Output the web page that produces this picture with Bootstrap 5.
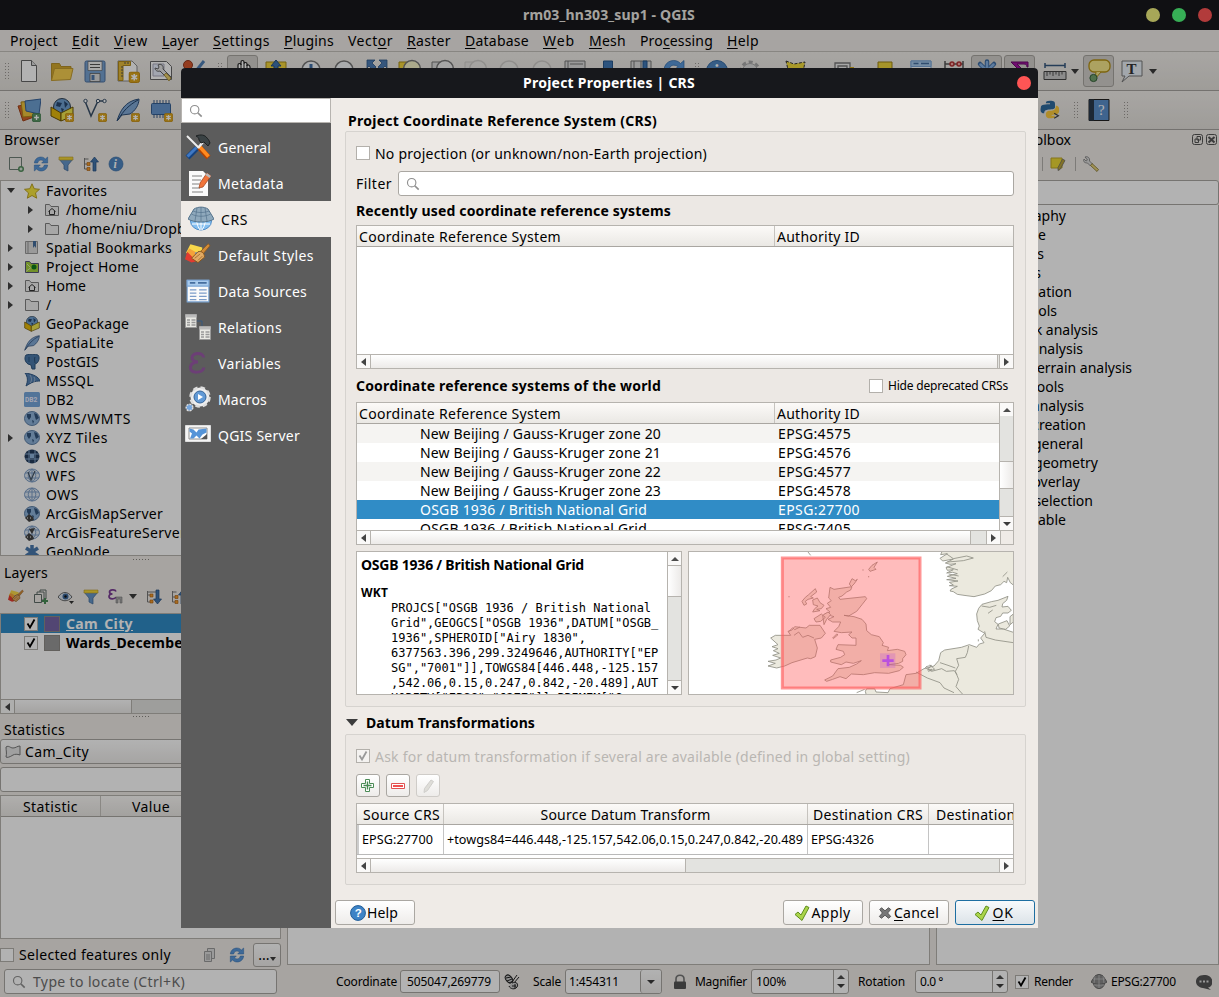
<!DOCTYPE html>
<html lang="en">
<head>
<meta charset="utf-8">
<meta name="viewport" content="width=device-width, initial-scale=1">
<title>rm03_hn303_sup1 - QGIS</title>
<link href="https://cdn.jsdelivr.net/npm/bootstrap@5.3.0/dist/css/bootstrap.min.css" rel="stylesheet">
<style>
:root{--win:#efebe7;--line:#b6b3ae;--sel:#308cc6}
body{font:14px/19px "Noto Sans","Open Sans",sans-serif;color:#000;background:var(--win);width:1219px;height:997px;overflow:hidden;position:relative}
span,b,u{white-space:nowrap}
u{text-underline-offset:2px;text-decoration-thickness:1px}
svg{display:block;flex:none}
.s24{width:24px;height:24px}.s26{width:26px;height:26px}.s16{width:16px;height:16px}.s20{width:20px;height:20px}
.t12{font-size:12px}
.fixed{flex:none}
/* main window */
.mainwin{width:1219px;height:997px}
.titlebar{height:30px;background:#17181c;color:#eceae4;flex:none;padding:0 1px 2px 0}
.dots{position:absolute;right:7px;top:8px;gap:12px}
.dot{width:14px;height:14px;border-radius:50%}
.menus{height:22px;padding-left:10px;gap:14px;border-bottom:1px solid #c3c0bb;background:#f0ebe8;flex:none}
.tools{height:39px;border-bottom:1px solid #a7a4a0;background:linear-gradient(#f1eeea,#e3e0db);flex:none;padding-left:4px}
.cell{width:33px;height:32px;display:flex;align-items:center;justify-content:center;flex:none}
.pressed{background:#d3d0cc;border:1px solid #a8a5a0;border-radius:3px;width:31px;margin:0 1px}
.grip{width:6px;height:18px;flex:none;background:radial-gradient(circle,#9c9994 .7px,transparent 1px) 0 0/3px 3px}
.hgrip{width:18px;height:3px;background:radial-gradient(circle,#8a8782 .7px,transparent 1px) 0 0/3px 3px}
.down{width:0;height:0;border:4.5px solid transparent;border-top:5.5px solid #3c3c3c;border-bottom:0;flex:none}
.up{width:0;height:0;border:4px solid transparent;border-bottom:4px solid #4c4c4c;border-top:0}
.right{width:0;height:0;border:4.5px solid transparent;border-left:5.5px solid #444;border-right:0}
.left{width:0;height:0;border:4px solid transparent;border-right:5px solid #444;border-left:0}
.sb .right{border-width:4px 0 4px 5px}
.down.sm{border-width:4px 4px 0}
.leftdock{width:281px;flex:none}
.pane{background:#fff;border:1px solid var(--line);overflow:hidden}
.trow{height:19px;display:flex;align-items:center;flex:none}
.trow .arr{width:23px;display:flex;justify-content:center;padding-right:4px;flex:none}
.trow svg{margin-right:6px}
.kid{padding-left:20px}
.colhead{height:21px;line-height:21px;background:linear-gradient(#fcfaf8,#eae8e4);border-bottom:1px solid #a9a6a1;flex:none}
.colhead>*{border-right:1px solid #c6c3be}
.colhead>*:last-child{border-right:0}
.box{border:1px solid #aaa7a2;border-radius:3px;background:#fff}
.raised{border:1px solid #aaa7a2;border-radius:3px;background:linear-gradient(#fff,#eeecea)}
.chk{width:14px;height:14px;border:1px solid #b3b0ab;background:#fff;flex:none}
.lyr{padding-left:23px;gap:6px}
.lyr .chk svg{margin:0}
.swatch{width:16px;height:16px;border:1px solid #8d8a86;flex:none}
.layer-on{background:var(--sel);color:#fff}
.shade{position:absolute;inset:0;background:rgba(0,0,0,.3)}
/* dialog */
.dlg{position:absolute;left:181px;top:68px;width:857px;height:860px;background:var(--win);border-radius:4px 4px 0 0;overflow:hidden}
.dlg-title{height:30px;background:#17181c;color:#fff;position:relative;flex:none;padding:0 1px 2px 0}
.side{width:150px;background:#5c5c5c;color:#fff;flex:none}
.side .search{height:25px;background:#fff;margin-bottom:6px;border:1px solid #b7b4b0;padding-left:7px}
.side .opt{height:36px;padding-left:4px}
.side .opt svg{margin-right:7px}
.side .opt.on{background:var(--win);color:#000;padding-left:7px}
.main{width:707px;flex:none;padding:0 12px 0 14px}
.group{border:1px solid #d6d3cf;border-radius:2px;background:#ece8e4;padding:0 11px 0 10px}
.sb{height:14px;border-top:1px solid var(--line);background:#e3e3e0;flex:none}
.sb .e{width:13px;display:flex;align-items:center;justify-content:center;background:#faf9f8;flex:none}
.sb .e.far{width:14px;border-left:1px solid var(--line)}
.sb .thumb{background:linear-gradient(#fff,#eceae8);border:solid var(--line);border-width:0 1px}
.vb{width:14px;border-left:1px solid var(--line);background:#e3e3e0;flex:none}
.vb .e{height:13px;display:flex;align-items:center;justify-content:center;background:#faf9f8}
.vb .e.far{height:14px;border-top:1px solid var(--line)}
.vb .thumb{background:linear-gradient(90deg,#fff,#eceae8);border:solid var(--line);border-width:1px 0}
.crow{height:19px;padding-left:63px;flex:none}
.crow:nth-child(odd){background:#f5f4f2}
.crow.on{background:var(--sel);color:#fff}
.crow .nm{width:358px;flex:none}
.wkt{font:12px/15px "DejaVu Sans Mono",monospace;white-space:pre;margin:0;overflow:hidden;padding:1px 0 0 30px;color:#000}
.sqbtn{width:24px;height:23px;display:flex;align-items:center;justify-content:center;margin-right:6px}
.dbtn{width:80px;height:25px;display:flex;align-items:center;justify-content:center;flex:none}
.dbtn .tk{margin-right:2px}
.okbtn{border-color:#1d6ea1;background:linear-gradient(#f8fafc,#dce3e8)}
.drow{height:30px;border-bottom:1px solid #b9b9b9;font-size:12.6px}
.drow>*{border-right:1px solid #c4c4c4;padding-left:3px}
.statusbar{height:31px;flex:none}
.spin{width:15px;border-left:1px solid #aaa7a2;gap:5px}
.rightdock{width:283px;flex:none}
.algs{padding:1px 0 0 101px;border-top:0;margin-bottom:1px}
.algs .trow>span{display:flex;justify-content:flex-end}
</style>
</head>
<body>
<svg width="0" height="0" class="position-absolute"><defs>
<symbol id="new" viewBox="0 0 24 24"><path d="M4.500 1.500h10l5 5v16h-15z" fill="#fff" stroke="#666" /><path d="M14.500 1.500v5h5" fill="#ddd" stroke="#666"/></symbol>
<symbol id="open" viewBox="0 0 24 24"><path d="M1.500 21.500V4.500h8l1.500 3h10v3" fill="#d3a82c" stroke="#b5902a"/><path d="M1.500 21.500l3-12h18.500l-2.500 11z" fill="#f6cf4f" stroke="#c29b30"/></symbol>
<symbol id="save" viewBox="0 0 24 24"><rect x="2" y="2" width="20" height="21" rx="1.500" fill="#78a2d2" stroke="#4c719f"/><path d="M5 2.500h14v9H5z" fill="#f4f4f4" stroke="#555" stroke-width=".6"/><path d="M7 5.500h10M7 8.500h10" stroke="#555"/><path d="M7 14.500h10v8H7z" fill="#ddd" stroke="#555" stroke-width=".7"/><path d="M8.500 16h3v5h-3z" fill="#4f78ab"/></symbol>
<symbol id="layout" viewBox="0 0 24 24"><path d="M2 2h14l5 5v15H2z" fill="#fff" stroke="#888"/><path d="M2.500 2.500h12v4H7v15H2.500z" fill="#e4bb3b" stroke="#b28a1b"/><path d="M5 8h2M5 11h2M5 14h2M5 17h2M9 3v2M12 3v2" stroke="#555"/><use href="#star" x="12.500" y="12.500" width="11.500" height="11.500"/></symbol>
<symbol id="star" viewBox="0 0 12 12"><rect x=".5" y=".5" width="11" height="11" rx="2" fill="#dca51c" stroke="#c08a10" /><path d="M6 2.500v7M3 4l6 4M9 4L3 8" stroke="#fff" stroke-width="1.700"/></symbol>
<symbol id="plusb" viewBox="0 0 12 12"><rect x=".5" y=".5" width="11" height="11" rx="2" fill="#5a9563" stroke="#3c7a49"/><path d="M6 2.800v6.400M2.800 6h6.400" stroke="#fff" stroke-width="1.800"/></symbol>
<symbol id="laymgr" viewBox="0 0 24 24"><path d="M1.500 2.500h16l5 5v13h-21z" fill="#fff" stroke="#666"/><path d="M4 5h11v12H4z" fill="#e9eefc" stroke="#aab"/><path d="M9 6c3-2 6 1 5 4l8 8-2 3-9-9c-3 1-5-1-5-3l3 1 1-2z" fill="#e6e6e6" stroke="#555" stroke-width=".9"/><path d="M17 14l5 5-2 3-5-6z" fill="#e9cf6c" stroke="#967d2a" stroke-width=".7"/></symbol>
<symbol id="style" viewBox="0 0 24 24"><circle cx="6" cy="6" r="4.500" fill="#d5582f" stroke="#94391d"/><path d="M22 2l-8 10" stroke="#4f7fb5" stroke-width="3"/><path d="M13 12l-5 8" stroke="#b5902a" stroke-width="3"/></symbol>
<symbol id="hand" viewBox="0 0 24 24"><path d="M8 23L4 15c-2-4 1-4 3-1V6c0-2 3-2 3 0V3c0-2 3-2 3 0v2c0-2 3-2 3 0v2c0-2 3-1 3 1l1 8-3 8z" fill="#fff" stroke="#222" stroke-width="1.200"/><path d="M10 5v7M13 5v7M16 6v6" stroke="#222"/></symbol>
<symbol id="pansel" viewBox="0 0 24 24"><path d="M2 3h20v16H2z" fill="#f3d53c" stroke="#a88d19"/><path d="M12 1l5 6h-3v9h-4V7H7z" fill="#3f74b0" stroke="#244f80"/></symbol>
<symbol id="lens" viewBox="0 0 24 24"><circle cx="12" cy="11" r="9" fill="#f2f5f8" stroke="#777" stroke-width="1.500"/></symbol>
<symbol id="zin" viewBox="0 0 24 24"><use href="#lens"/><path d="M12 5v11M6.500 10.500h11" stroke="#3f6fa6" stroke-width="3"/></symbol>
<symbol id="zout" viewBox="0 0 24 24"><use href="#lens"/><path d="M6.500 10.500h11" stroke="#3f6fa6" stroke-width="3"/></symbol>
<symbol id="zfull" viewBox="0 0 24 24"><path d="M2 1h8l-3 3 4 4-3 3-4-4-2 2zM22 1h-8l3 3-4 4 3 3 4-4 2 2z" fill="#4c7cb4" stroke="#2d5687" stroke-width=".8"/></symbol>
<symbol id="zsel" viewBox="0 0 24 24"><path d="M1 3h14v14H1z" fill="#f3d53c" stroke="#a88d19"/><circle cx="14" cy="10" r="8.500" fill="#f5f2c8" stroke="#777" stroke-width="1.500"/></symbol>
<symbol id="zlay" viewBox="0 0 24 24"><path d="M1 3h14v14H1z" fill="#ddd" stroke="#777"/><circle cx="14" cy="10" r="8.500" fill="#eee" stroke="#777" stroke-width="1.500"/></symbol>
<symbol id="mapv" viewBox="0 0 24 24"><path d="M2 2h20v16H2z" fill="#ddd" stroke="#777"/><path d="M5 2v16M7 5h13" stroke="#777"/></symbol>
<symbol id="mark" viewBox="0 0 24 24"><path d="M7.500 2h9v18l-4.500-4-4.500 4z" fill="#3f77b5" stroke="#27568c"/></symbol>
<symbol id="mapm" viewBox="0 0 24 24"><path d="M2 2h20v16H2z" fill="#ddd" stroke="#777"/><path d="M5 2v16M12 2v16" stroke="#777"/><path d="M14 2h4v14l-2-2-2 2z" fill="#3f77b5" stroke="#27568c"/></symbol>
<symbol id="refresh" viewBox="0 0 24 24"><path d="M2 10.500C3 1 14-1 18.500 4.500L22 1.500v9h-9l3-3C12 5 8 6 7 10.500zM22 13.500c-1 9.500-12 11.500-16.500 6L2 22.500v-9h9l-3 3c4 2.500 8 1.500 9-3z" fill="#5a97d8" stroke="#2e68a8" stroke-width=".7"/></symbol>
<symbol id="info" viewBox="0 0 24 24"><circle cx="12" cy="12" r="10.500" fill="#4f86c0" stroke="#356aa4"/><text x="8.300" y="18" font-family="Liberation Serif" font-style="italic" font-weight="700" font-size="18" fill="#fff">i</text></symbol>
<symbol id="gear" viewBox="0 0 24 24"><circle cx="12" cy="12" r="9" fill="none" stroke="#aaa" stroke-width="3" stroke-dasharray="4 2.800"/><circle cx="12" cy="12" r="7.500" fill="#ddd" stroke="#aaa"/></symbol>
<symbol id="gearb" viewBox="0 0 24 24"><path d="M12 2.500v19M3 12h18M5 5l14 14M19 5L5 19" stroke="#3c6ba3" stroke-width="4.500" stroke-linecap="round"/><path d="M12 3v18M3.500 12h17M5.500 5.500l13 13M18.500 5.500l-13 13" stroke="#86b1e2" stroke-width="2.500" stroke-linecap="round"/></symbol>
<symbol id="yel" viewBox="0 0 24 24"><path d="M1 2l8 3 11-2-3 16H5z" fill="#f2dc3d" stroke="#333" stroke-dasharray="3 1.500"/></symbol>
<symbol id="ysq" viewBox="0 0 24 24"><path d="M5 3h14v14H5z" fill="#eed53c" stroke="#9b8214"/></symbol>
<symbol id="form" viewBox="0 0 24 24"><path d="M4 4h15v14H4zM7 7h9v6H7z" fill="#eee" stroke="#777" stroke-width="1.300"/><path d="M19 9h4" stroke="#cfa91f" stroke-width="2"/></symbol>
<symbol id="tbl" viewBox="0 0 24 24"><path d="M2 2h20v20H2z" fill="#fafafa" stroke="#7da7d6"/><path d="M2 2h20v5.500H2z" fill="#a9cbed" stroke="#7da7d6"/><path d="M4.500 4.500h5M12 4.500h8" stroke="#456e9e" stroke-width="1.500"/><path d="M4.500 11h6M13 11h7M4.500 14h6M13 14h7M4.500 17h6M13 17h7M4.500 20h6M13 20h7" stroke="#7b9cc9" stroke-width="1.300"/></symbol>
<symbol id="abac" viewBox="0 0 24 24"><path d="M3 2v20M21 2v20M3 5h18M3 12h18" stroke="#555" stroke-width="1.500"/><g fill="#f5a6a6" stroke="#b53434" stroke-width="1.500"><circle cx="10" cy="5" r="2"/><circle cx="17" cy="5" r="2"/></g></symbol>
<symbol id="sigma" viewBox="0 0 24 24"><path d="M3 3h17v5h-1c0-2-1-3-3-3H9l6 6-7 8h9c2 0 3-1 4-3v5H4v-2l7-8z" fill="#a314a3" stroke="#6b0b6b"/></symbol>
<symbol id="ruler" viewBox="0 0 24 24"><path d="M2 4v5M22 4v5M2 6.500h20" stroke="#36587e" stroke-width="1.500"/><path d="M1 12.500h22v8H1z" fill="#c9c9c9" stroke="#444"/><path d="M4 13v4M7 13v2.500M10 13v4M13 13v2.500M16 13v4M19 13v2.500" stroke="#444" stroke-width=".9"/></symbol>
<symbol id="tip" viewBox="0 0 26 26"><rect x="3" y="2" width="21" height="12" rx="5" fill="#f6e98c" stroke="#b59116" stroke-width="1.300"/><path d="M10 14l-1 7 6-7" fill="#f6e98c" stroke="#b59116"/><circle cx="7.500" cy="20" r="3.600" fill="#74a36f" stroke="#35603a"/></symbol>
<symbol id="ttip" viewBox="0 0 24 24"><path d="M2 2h20v15H9l-7 6 3-6H2z" fill="#e8f0f7" stroke="#777"/><text x="6.500" y="15" font-family="Liberation Serif" font-size="15" font-weight="700" fill="#333">T</text></symbol>
<symbol id="addlay" viewBox="0 0 24 24"><path d="M1 8l12-2 4 13-11 4z" fill="#d2632b" stroke="#a3431a"/><path d="M4 4l12-1 1 15-11 1z" fill="#efc43e" stroke="#b3881b"/><path d="M8 3l16-2-2 15-13-3z" fill="#6e9fd2" stroke="#36629a"/><use href="#plusb" x="15" y="15" width="9" height="9"/></symbol>
<symbol id="gpkg" viewBox="0 0 24 24"><circle cx="12" cy="9" r="8.500" fill="#6f9fd0" stroke="#345"/><path d="M7 4l5 1-2 4-4-1zM14 3l4 3-3 4zM11 10l3 1-2 4z" fill="#28476d"/><path d="M1 9l10 6v8L1 18z" fill="#e5b90b" stroke="#6b5306"/><path d="M23 9l-12 6v8l12-5z" fill="#efe54f" stroke="#6b5306"/></symbol>
<symbol id="vec" viewBox="0 0 24 24"><path d="M2 3l6 15 7-15h7" fill="none" stroke="#3a5068" stroke-width="1.500"/><g fill="#fff" stroke="#3a5068"><circle cx="2.500" cy="3" r="1.700"/><circle cx="15" cy="3" r="1.700"/><circle cx="21.500" cy="3" r="1.700"/></g></symbol>
<symbol id="quill" viewBox="0 0 24 24"><path d="M1 23C4 13 9 3 23 1c0 6-4 12-9 15l-8 1z" fill="#82a9d6" stroke="#2d4f79"/><path d="M2 22C7 13 13 7 22 2" stroke="#26466c" fill="none"/></symbol>
<symbol id="chip" viewBox="0 0 24 24"><path d="M5 2v18M8 2v18M11 2v18M14 2v18M17 2v18M20 2v18" stroke="#3a5c86"/><rect x="2.500" y="5.500" width="19" height="11" rx="1" fill="#6696cd" stroke="#365f92"/></symbol>
<symbol id="py" viewBox="0 0 24 24"><path d="M12 1c5 0 6 1 6 4v4c0 3-8 2-10 3-2 0-3 2-3 4-4 0-5-3-4-7 0-3 2-4 11-4V4H7c0-2 1-3 5-3z" fill="#2f6a9e"/><path d="M19 7c4 0 4 3 4 6s-2 5-9 5v1h4c0 3-3 3-6 3s-5-1-5-4 1-5 5-5 7-1 7-6z" fill="#fccb3c"/><path d="M17 16l5 3-5 3" fill="none" stroke="#444" stroke-width="1.500"/></symbol>
<symbol id="book" viewBox="0 0 24 24"><path d="M2 1.500h20v21H2z" fill="#5b90cc" stroke="#222"/><path d="M2 1.500h5v21H2z" fill="#2a3a4d"/><text x="11" y="17" font-family="Liberation Serif" font-size="15" fill="#fff">?</text></symbol>
<symbol id="addsq" viewBox="0 0 16 16"><path d="M1.500 1.500h12v12h-12z" fill="none" stroke="#6f7f76"/><circle cx="13" cy="13" r="3" fill="#538d5c"/><path d="M13 11.500v3M11.500 13h3" stroke="#fff"/></symbol>
<symbol id="funnel" viewBox="0 0 16 16"><path d="M1 3h14l-5 6v6l-4-2V9z" fill="#6595c9" stroke="#3f6797" stroke-width=".7"/><path d="M1 1h14v3H1z" fill="#f2d63a" stroke="#b6982a" stroke-width=".6"/></symbol>
<symbol id="treeup" viewBox="0 0 16 16"><path d="M1.500 2v11h5M1.500 3h4M1.500 8h4" fill="none" stroke="#777"/><path d="M4 6.500h3v3H4zM4 11.500h3v3H4z" fill="#f29a2b" stroke="#a75c0b" stroke-width=".6"/><path d="M11.500 1l4 5h-2.500v9h-3V6H7.500z" fill="#4476ad" stroke="#274f7e" stroke-width=".7"/></symbol>
<symbol id="treedn" viewBox="0 0 16 16"><path d="M1.500 2v11h5M1.500 3h10M1.500 6h4" fill="none" stroke="#777"/><path d="M4 5h3v3H4zM4 11h3v3H4z" fill="#f29a2b" stroke="#a75c0b" stroke-width=".6"/><path d="M11.500 15l4-5h-2.500V1h-3v9H7.500z" fill="#4476ad" stroke="#274f7e" stroke-width=".7"/></symbol>
<symbol id="fav" viewBox="0 0 16 16"><path d="M8 .8l2.200 4.900 5.300.6-4 3.600 1.200 5.300L8 12.500l-4.700 2.700 1.200-5.300-4-3.600 5.300-.6z" fill="#f7e63f" stroke="#b49a1a" stroke-width=".9"/></symbol>
<symbol id="fold" viewBox="0 0 16 16"><path d="M1.500 13.500v-11h4l1.500 2h7.500v9z" fill="#efefef" stroke="#808080"/></symbol>
<symbol id="foldh" viewBox="0 0 16 16"><use href="#fold"/><path d="M4.500 9.500l3.500-3 3.500 3M5.500 9v3.500h5V9" fill="none" stroke="#333"/></symbol>
<symbol id="bm" viewBox="0 0 16 16"><path d="M1.500 1.500h12v12h-12z" fill="#ddd" stroke="#999"/><path d="M4 1v12" stroke="#999"/><path d="M9 1h3v7l-1.500-2L9 8z" fill="#466f9f"/></symbol>
<symbol id="ph" viewBox="0 0 16 16"><path d="M1.500 13.500v-11h4l1.500 2h7.500v9z" fill="#a4d03d" stroke="#557"/><circle cx="10" cy="8" r="2.500" fill="#0d7d1c"/><path d="M2 12.500l5-4M3 5l3 3" stroke="#e8f4c0" stroke-width=".8"/></symbol>
<symbol id="pg" viewBox="0 0 16 16"><path d="M2 1c4-1 9-1 12 0 2 2 1 6-1 8l-2 1v5H8l-1-4-3-1C1 8 0 4 2 1z" fill="#4b79aa" stroke="#2f567f"/><path d="M5 3v5M11 3c-1 2 0 4 0 6" stroke="#2f567f"/></symbol>
<symbol id="ms" viewBox="0 0 16 16"><path d="M1 0c8 1 14 4 15 8-5 0-8 1-14 5 2-5 2-9-1-13z" fill="#5582b5" stroke="#305987"/><path d="M6 2c2 3 2 6 0 8M10 4c1 2 1 3 0 5" stroke="#bcd" fill="none" stroke-width=".7"/></symbol>
<symbol id="db2" viewBox="0 0 16 16"><rect width="16" height="15" rx="1.500" fill="#76a6dc"/><text x="1" y="9.800" font-family="Roboto" font-weight="700" font-size="6.600" fill="#eef">DB2</text></symbol>
<symbol id="glb" viewBox="0 0 16 16"><ellipse cx="8" cy="7.500" rx="7.500" ry="7" fill="#8fb3da" stroke="#5d7fa6"/><path d="M3 3l4 0 0 3-2 3-2-3zM10 2l3 1 2 4-3 2-1-3zM8 9l2 1-1 3z" fill="#31547c"/></symbol>
<symbol id="wcs" viewBox="0 0 16 16"><ellipse cx="8" cy="7.500" rx="7.500" ry="7" fill="#243d5c"/><path d="M1 5h14M1 10h14M5 1v13M11 1v13" stroke="#86a8cc"/><path d="M6 5h4v4H6z" fill="#8fb3da"/></symbol>
<symbol id="ows" viewBox="0 0 16 16"><ellipse cx="8" cy="7.500" rx="7.500" ry="6.500" fill="#dfe8f2" stroke="#7d9dc6"/><path d="M1 5h14M1 10h14M8 1v13M8 1C3 4 3 11 8 14c5-3 5-10 0-13" stroke="#7d9dc6" fill="none"/></symbol>
<symbol id="wfs" viewBox="0 0 16 16"><use href="#ows"/><path d="M4 4l3 8 4-9" fill="none" stroke="#456" stroke-width="1.200"/></symbol>
<symbol id="arc" viewBox="0 0 16 16"><use href="#glb"/><path d="M1 12l4-4 4 3 1 3-5 2z" fill="#444" /><path d="M3 12h1M6 12h1" stroke="#fff"/></symbol>
<symbol id="arf" viewBox="0 0 16 16"><use href="#ows"/><path d="M1 12l4-4 4 3 1 3-5 2zM5 4l3 5 3-6" fill="#444"/><path d="M3 12h1M6 12h1" stroke="#fff"/></symbol>
<symbol id="gn" viewBox="0 0 16 16"><path d="M8 1v14M2 4l12 8M14 4L2 12" stroke="#4a79ad" stroke-width="3.500"/></symbol>
<symbol id="brush" viewBox="0 0 24 24"><path d="M5 2l11 3-1 8-8 2-6-5z" fill="#f8d84a"/><path d="M2 9l6 3 2 6-4 1-6-3z" fill="#e23b30"/><path d="M4 6l7 4-4 4-5-5z" fill="#f4a23a"/><path d="M9 10l7-2-5 6z" fill="#5a95dc"/><path d="M21.500 1.500l1.500 2-6 7-2.500-2z" fill="#d38b36" stroke="#8b561a" stroke-width=".7"/><path d="M12 9c3-1 6 1 6 5l-6 5-6-4z" fill="#e3ab64" stroke="#8b561a" stroke-width=".9"/><path d="M9 15l5-4M12 17l4-4" stroke="#8b561a" stroke-width=".6"/></symbol>
<symbol id="copyp" viewBox="0 0 16 16"><path d="M1.500 5.500h7v8h-7zM4 5V3h7v8H9M7 3V1h6v9h-2" fill="none" stroke="#5d6a66"/><path d="M12 9v6M9 12h6" stroke="#4a8c56" stroke-width="2"/></symbol>
<symbol id="eye" viewBox="0 0 16 16"><path d="M0 8c4-6 10-6 14 0-4 5-10 5-14 0z" fill="#d9e3ee" stroke="#666"/><circle cx="7.500" cy="7.500" r="3" fill="#3d689b"/><circle cx="7.500" cy="7.500" r="1.200" fill="#111"/><path d="M11 12h5l-2.500 3z" fill="#333"/></symbol>
<symbol id="eps" viewBox="0 0 16 16"><path d="M8 2.500C7 0 1.500.5 1.500 3c0 1.500 1.500 2 3 2C2.500 5 1 6 1 7.500c0 3 6 3 7 .5" fill="none" stroke="#7a3d94" stroke-width="1.700"/><path d="M8 8h6v6H12v-4H10v4H8z" fill="#aaa" stroke="#777" stroke-width=".6"/></symbol>
<symbol id="poly" viewBox="0 0 16 16"><path d="M1 3c3-2 4 1 7 1s4-2 7-2v9c-3-1-5-1-7 0-3 2-6 3-7 2 1-4 0-6 0-10z" fill="#e6e6e6" stroke="#777"/></symbol>
<symbol id="docs" viewBox="0 0 16 16"><path d="M5.500 1.500h7v10h-7z" fill="#ddd" stroke="#999"/><path d="M2.500 4.500h7v10h-7z" fill="#ddd" stroke="#999"/><path d="M4 8h4M4 10h4M4 12h4" stroke="#999"/></symbol>
<symbol id="find" viewBox="0 0 16 16"><circle cx="6.500" cy="6.500" r="4.800" fill="none" stroke="#8f8f8f" stroke-width="1.300"/><path d="M10 10l4.500 4.500" stroke="#8f8f8f" stroke-width="1.900"/></symbol>
<symbol id="note" viewBox="0 0 16 16"><path d="M1 2h11v10H1z" fill="#ecd936" stroke="#bfa728"/><path d="M12.500 3l2.500 1.500-5 9-2 1 0-3z" fill="#bca539" stroke="#666" stroke-width=".7"/></symbol>
<symbol id="wrench" viewBox="0 0 16 16"><path d="M2 1c3-1 5 1 4.500 4l3 3-2 2-3-3C1 7 0 5 1 3l2 2 1.500-1z" fill="#ddd" stroke="#777" stroke-width=".8"/><path d="M9 7.500l6.500 6-1.500 2-6.500-6z" fill="#e6d27a" stroke="#82722e" stroke-width=".8"/></symbol>
<symbol id="tools" viewBox="0 0 26 26"><path d="M2 2l12 12" stroke="#eee" stroke-width="2"/><path d="M14.500 13.500l9 10" stroke="#b34200" stroke-width="5.500"/><path d="M14.500 12.500l9 10" stroke="#ff8a1f" stroke-width="3.500"/><path d="M2.500 23.500l9-9" stroke="#15427f" stroke-width="5.500"/><path d="M2.500 22.500l9-9" stroke="#3f78c4" stroke-width="3"/><path d="M13 14l5-6" stroke="#eee" stroke-width="2.500"/><path d="M11 2c5-2 9-1 11 2 1 1 2 2 3 5l-2 3-4-4-3 1-2-3c0-2-1-3-3-4z" fill="#3a4244" stroke="#1d2122"/></symbol>
<symbol id="meta" viewBox="0 0 26 26"><path d="M4 1h14l5 5v20H4z" fill="#fbfbfb"/><path d="M7 6h10M7 10h9M7 14h7M7 18h8M7 22h11" stroke="#aaa" stroke-width="1.500"/><path d="M22 3l4 3-8 11-4 1 1-5z" fill="#f0743a" stroke="#9c3d18" stroke-width=".7"/><path d="M22 3l4 3-1.500 2-4-3z" fill="#bbb"/></symbol>
<symbol id="crs" viewBox="0 0 26 26"><ellipse cx="13" cy="15" rx="10.500" ry="9" fill="#84bff1" stroke="#4d8cc8"/><path d="M4 18h18M8 8c0 6 1 12 4 16M18 8c0 6-1 12-4 16M13 8v16" stroke="#fff" fill="none"/><path d="M6 3C10 .5 16 .5 20 3l6 10c-6 4-20 4-26 0z" fill="#8fa9bc" stroke="#54738c"/><path d="M3.500 8c5 3 14 3 19 0M5 5c5 2 11 2 16 0M9 2L7 15M17 2l2 13M13 1v14" stroke="#54738c" fill="none" stroke-width=".7"/></symbol>
<symbol id="rel" viewBox="0 0 26 26"><path d="M12 7h5v6" stroke="#36587e" fill="none"/><g id="rt"><path d="M.5.500h11v13H.5z" fill="#e9e9e4" stroke="#999"/><path d="M.5.500h11v3H.5z" fill="#bbb"/><path d="M2 6h3M6.500 6h4M2 8.500h3M6.500 8.500h4M2 11h3M6.500 11h4" stroke="#999" stroke-width="1.300"/></g><use href="#rt" x="14" y="12"/></symbol>
<symbol id="var" viewBox="0 0 26 26"><path d="M18.500 7.500c0-5.500-11-5.500-11.500 0 0 3 3 4.500 6 4.500-5 0-8 2.500-7.500 6.500 1 5 12 5 13.500-1" fill="none" stroke="#6c3f76" stroke-width="3"/></symbol>
<symbol id="mac" viewBox="0 0 26 26"><circle cx="15" cy="11" r="9.500" fill="#eee" stroke="#ddd" stroke-width="2.500" stroke-dasharray="4.500 3"/><circle cx="15" cy="11" r="6" fill="#629ad6" stroke="#36659a"/><path d="M13 8l5 3-5 3z" fill="#fff"/><circle cx="4.500" cy="21.500" r="3.300" fill="#75a6de" stroke="#ddd" stroke-width="1.500" stroke-dasharray="2 1"/></symbol>
<symbol id="srv" viewBox="0 0 26 26"><path d="M.5 3.500h25v16H.5z" fill="#f4f4f4" stroke="#ddd"/><path d="M4 6h18v11H4z" fill="#fff" stroke="#777" stroke-width=".8"/><path d="M4.500 6.500l4 1 3 3 2-3 8-1v4l-4 2-3 4-3-3-3 3H5l2-5-2.500-2z" fill="#5594d8"/><path d="M22 12v5h-6z" fill="#555"/></symbol>
<symbol id="tick" viewBox="0 0 16 16"><path d="M1 9.500l3-2.500 3 3L12 1l3 1.500L8 15.500z" fill="#aad44a" stroke="#5f8d1f"/></symbol>
<symbol id="cross" viewBox="0 0 16 16"><path d="M2 4l2-2 4 3.500L12 2l2.500 2-3.500 4 3.500 4-2.500 2-4-3.500L4 14l-2.500-2L5 8z" fill="#777" stroke="#4c4c4c"/></symbol>
<symbol id="quest" viewBox="0 0 16 16"><circle cx="8" cy="8" r="7.400" fill="#3d83c6" stroke="#215d98"/><text x="4.700" y="12.300" font-family="Liberation Sans" font-weight="700" font-size="11.500" fill="#fff">?</text></symbol>
<symbol id="lock" viewBox="0 0 16 16"><path d="M4 8V5c0-5 8-5 8 0v3" fill="none" stroke="#767676" stroke-width="1.600"/><rect x="2" y="7.500" width="12" height="7.500" rx="1" fill="#555"/></symbol>
<symbol id="ext" viewBox="0 0 16 16"><ellipse cx="5" cy="5" rx="4.500" ry="3" transform="rotate(50 5 5)" fill="#ccc" stroke="#222"/><path d="M2 4l5-1M3 7l5-2M5 9l4-2M13 1l-5 7M15 3l-5 6" stroke="#222"/><path d="M8 9c4-2 7 1 5 4-2 3-7 2-8-1" fill="#ccc" stroke="#222"/><path d="M8 12h4M11 10v4" stroke="#222"/></symbol>
<symbol id="ggl" viewBox="0 0 16 16"><ellipse cx="8" cy="9" rx="5.500" ry="5.500" fill="#999" stroke="#666"/><path d="M4 2c3-2 5-2 8 0l4 6c-4 3-12 3-16 0z" fill="#888" stroke="#666"/><path d="M2 5h12M4 2l-1 7M8 1v13M12 2l1 7M3 11h10" stroke="#ccc" fill="none" stroke-width=".7"/></symbol>
<symbol id="bub" viewBox="0 0 16 16"><path d="M8 1c11 0 10 12 4 12.500l3 2.500-8-2C-3 13-2 1 8 1z" fill="#555"/><path d="M3.500 7.500h2M7 7.500h2M10.500 7.500h2" stroke="#ddd" stroke-width="2"/></symbol>
<symbol id="ck" viewBox="0 0 12 12"><path d="M2.500 5.500L5 9.500 9.500 1.500" fill="none" stroke="currentColor" stroke-width="1.800"/></symbol>
</defs></svg>

<div class="mainwin d-flex flex-column">
  <header class="titlebar d-flex align-items-center justify-content-center"><b data-w="172">rm03_hn303_sup1 - QGIS</b>
    <div class="dots d-flex"><i class="dot" style="background:#f0f07f"></i><i class="dot" style="background:#50fa7b"></i><i class="dot" style="background:#ff5555"></i></div></header>
  <nav class="menus d-flex align-items-center">
    <span data-w="48">Pro<u>j</u>ect</span><span data-w="28"><u>E</u>dit</span><span data-w="34"><u>V</u>iew</span><span data-w="37"><u>L</u>ayer</span><span data-w="57"><u>S</u>ettings</span><span data-w="50"><u>P</u>lugins</span><span data-w="45">Vect<u>o</u>r</span><span data-w="44"><u>R</u>aster</span><span data-w="64"><u>D</u>atabase</span><span data-w="32"><u>W</u>eb</span><span data-w="37"><u>M</u>esh</span><span data-w="73">Pro<u>c</u>essing</span><span data-w="32"><u>H</u>elp</span>
  </nav>
  <div class="tools d-flex align-items-center">
    <i class="grip"></i><div class="d-flex" style="margin:0 3px 0 2px">
    <div class="cell"><svg class="s24"><use href="#new"/></svg></div><div class="cell"><svg class="s24"><use href="#open"/></svg></div><div class="cell"><svg class="s24"><use href="#save"/></svg></div><div class="cell"><svg class="s24"><use href="#layout"/></svg></div><div class="cell"><svg class="s24"><use href="#laymgr"/></svg></div><div class="cell"><svg class="s24"><use href="#style"/></svg></div></div>
    <i class="grip ms-1" style="margin-right:3px"></i>
    <div class="cell pressed"><svg class="s24"><use href="#hand"/></svg></div><div class="cell"><svg class="s24"><use href="#pansel"/></svg></div><div class="cell" style="margin-left:2px"><svg class="s24"><use href="#zin"/></svg></div><div class="cell"><svg class="s24"><use href="#zout"/></svg></div><div class="cell"><svg class="s24"><use href="#zfull"/></svg></div><div class="cell"><svg class="s24"><use href="#zsel"/></svg></div><div class="cell"><svg class="s24"><use href="#zlay"/></svg></div><div class="cell opacity-25"><svg class="s24"><use href="#zlay"/></svg></div><div class="cell opacity-25"><svg class="s24"><use href="#lens"/></svg></div><div class="cell opacity-25"><svg class="s24"><use href="#lens"/></svg></div><div class="cell"><svg class="s24"><use href="#mapv"/></svg></div><div class="cell"><svg class="s24"><use href="#mark"/></svg></div><div class="cell"><svg class="s24"><use href="#mapm"/></svg></div><div class="cell"><svg class="s24"><use href="#refresh"/></svg></div>
    <i class="grip ms-1"></i><div class="cell"><svg class="s24"><use href="#info"/></svg></div><div class="cell"><svg class="s24"><use href="#gear"/></svg></div><div class="cell" style="margin-left:14px"><svg class="s24"><use href="#yel"/></svg></div><div class="cell" style="margin-left:13px"><svg class="s24"><use href="#form"/></svg></div><div class="cell" style="margin-left:9px"><svg class="s24"><use href="#ysq"/></svg></div><div class="cell" style="margin-left:3px"><svg class="s24"><use href="#tbl"/></svg></div><div class="cell"><svg class="s24"><use href="#abac"/></svg></div><div class="cell pressed"><svg class="s24"><use href="#gearb"/></svg></div><div class="cell pressed"><svg class="s24"><use href="#sigma"/></svg></div>
    <div class="d-flex align-items-center ms-auto fixed" style="width:181px"><div class="cell"><svg class="s24"><use href="#ruler"/></svg></div><i class="down"></i><div class="cell pressed ms-1"><svg class="s26"><use href="#tip"/></svg></div><div class="cell"><svg class="s24"><use href="#ttip"/></svg></div><i class="down" style="margin-left:1px"></i></div>
  </div>
  <div class="tools d-flex align-items-center">
    <i class="grip"></i><div class="d-flex" style="margin-left:2px">
    <div class="cell"><svg class="s24"><use href="#addlay"/></svg></div>
    <div class="cell"><svg class="s24"><use href="#gpkg"/><use href="#star" x="15" y="15" width="9" height="9"/></svg></div>
    <div class="cell"><svg class="s24"><use href="#vec"/><use href="#star" x="15" y="15" width="9" height="9"/></svg></div>
    <div class="cell"><svg class="s24"><use href="#quill"/><use href="#star" x="15" y="15" width="9" height="9"/></svg></div>
    <div class="cell"><svg class="s24"><use href="#chip"/><use href="#star" x="15" y="15" width="9" height="9"/></svg></div></div>
    <div class="d-flex align-items-center ms-auto" style="width:186px"><div class="cell"><svg class="s20"><use href="#py"/></svg></div><i class="grip" style="margin-left:7px"></i><div class="cell" style="margin-left:3px"><svg class="s24"><use href="#book"/></svg></div><i class="grip ms-2"></i></div>
  </div>

  <div class="d-flex flex-grow-1" style="min-height:0">
    <aside class="leftdock d-flex flex-column">
      <div class="d-flex align-items-center ps-1 fixed" style="height:19px"><span data-w="56">Browser</span></div>
      <div class="d-flex align-items-center fixed" style="height:30px;gap:9px;padding-left:8px"><svg class="s16"><use href="#addsq"/></svg><svg class="s16"><use href="#refresh"/></svg><svg class="s16"><use href="#funnel"/></svg><svg class="s16"><use href="#treeup"/></svg><svg class="s16"><use href="#info"/></svg></div>
      <div class="pane d-flex flex-column fixed" style="height:376px;margin-top:1px">
        <div class="trow"><i class="arr"><i class="down"></i></i><svg class="s16"><use href="#fav"/></svg><span data-w="61">Favorites</span></div>
        <div class="trow kid"><i class="arr"><i class="right"></i></i><svg class="s16"><use href="#foldh"/></svg><span data-w="71">/home/niu</span></div>
        <div class="trow kid"><i class="arr"><i class="right"></i></i><svg class="s16"><use href="#fold"/></svg><span data-w="136">/home/niu/Dropbox</span></div>
        <div class="trow"><i class="arr"><i class="right"></i></i><svg class="s16"><use href="#bm"/></svg><span data-w="126">Spatial Bookmarks</span></div>
        <div class="trow"><i class="arr"><i class="right"></i></i><svg class="s16"><use href="#ph"/></svg><span data-w="93">Project Home</span></div>
        <div class="trow"><i class="arr"><i class="right"></i></i><svg class="s16"><use href="#foldh"/></svg><span data-w="40">Home</span></div>
        <div class="trow"><i class="arr"><i class="right"></i></i><svg class="s16"><use href="#fold"/></svg><span>/</span></div>
        <div class="trow"><i class="arr"></i><svg class="s16"><use href="#gpkg"/></svg><span data-w="83">GeoPackage</span></div>
        <div class="trow"><i class="arr"></i><svg class="s16"><use href="#quill"/></svg><span data-w="68">SpatiaLite</span></div>
        <div class="trow"><i class="arr"></i><svg class="s16"><use href="#pg"/></svg><span data-w="53">PostGIS</span></div>
        <div class="trow"><i class="arr"></i><svg class="s16"><use href="#ms"/></svg><span data-w="48">MSSQL</span></div>
        <div class="trow"><i class="arr"></i><svg class="s16"><use href="#db2"/></svg><span data-w="28">DB2</span></div>
        <div class="trow"><i class="arr"></i><svg class="s16"><use href="#glb"/></svg><span data-w="85">WMS/WMTS</span></div>
        <div class="trow"><i class="arr"><i class="right"></i></i><svg class="s16"><use href="#glb"/></svg><span data-w="62">XYZ Tiles</span></div>
        <div class="trow"><i class="arr"></i><svg class="s16"><use href="#wcs"/></svg><span data-w="31">WCS</span></div>
        <div class="trow"><i class="arr"></i><svg class="s16"><use href="#wfs"/></svg><span data-w="30">WFS</span></div>
        <div class="trow"><i class="arr"></i><svg class="s16"><use href="#ows"/></svg><span data-w="33">OWS</span></div>
        <div class="trow"><i class="arr"></i><svg class="s16"><use href="#arc"/></svg><span data-w="117">ArcGisMapServer</span></div>
        <div class="trow"><i class="arr"></i><svg class="s16"><use href="#arf"/></svg><span data-w="140">ArcGisFeatureServer</span></div>
        <div class="trow"><i class="arr"></i><svg class="s16"><use href="#gn"/></svg><span data-w="64">GeoNode</span></div>
      </div>
      <i class="hgrip align-self-center fixed" style="margin-top:2px"></i>
      <div class="d-flex align-items-center ps-1 fixed" style="height:21px;margin-top:1px"><span data-w="44">Layers</span></div>
      <div class="d-flex align-items-center ps-2 fixed" style="height:30px;gap:9px;padding-bottom:3px"><svg class="s16"><use href="#brush"/></svg><svg class="s16"><use href="#copyp"/></svg><svg class="s16"><use href="#eye"/></svg><svg class="s16"><use href="#funnel"/></svg><svg class="s16"><use href="#eps"/></svg><i class="down" style="margin-left:-4px"></i><svg class="s16"><use href="#treedn"/></svg><svg class="s16"><use href="#treeup"/></svg></div>
      <div class="pane d-flex flex-column fixed" style="height:101px">
        <div class="trow lyr layer-on fw-bold"><i class="chk text-black"><svg width="12" height="12"><use href="#ck"/></svg></i><i class="swatch" style="background:#7665a5"></i><span class="text-decoration-underline" data-w="67">Cam_City</span></div>
        <div class="trow lyr fw-bold"><i class="chk"><svg width="12" height="12"><use href="#ck"/></svg></i><i class="swatch" style="background:#999"></i><span data-w="162">Wards_December_2016</span></div>
        <div class="sb d-flex mt-auto"><i class="e"><i class="left"></i></i><i class="thumb" style="width:118px"></i></div>
      </div>
      <i class="hgrip align-self-center fixed" style="margin-top:1px"></i>
      <div class="d-flex align-items-center ps-1 fixed" style="height:21px;padding-top:2px"><span data-w="61">Statistics</span></div>
      <div class="raised d-flex align-items-center ps-1 fixed" style="height:25px"><svg class="s16 me-1"><use href="#poly"/></svg><span data-w="64">Cam_City</span></div>
      <div class="box fixed" style="height:25px;margin-top:3px"></div>
      <div class="pane fixed" style="height:144px;margin-top:3px"><div class="colhead d-flex"><span class="text-center" style="width:100px"><span data-w="55">Statistic</span></span><span class="text-center" style="width:101px"><span data-w="38">Value</span></span><span></span></div></div>
      <div class="d-flex align-items-center fixed" style="height:31px"><i class="chk"></i><span style="margin-left:5px" data-w="152">Selected features only</span><svg class="s16 ms-auto" style="margin-right:11px"><use href="#docs"/></svg><svg class="s16 me-2"><use href="#refresh"/></svg><div class="raised d-flex align-items-center justify-content-center" style="width:28px;height:24px">...<i class="down mt-2" style="border-width:4px 3px 0"></i></div></div>
    </aside>
    <div class="pane flex-grow-1" style="margin:0 6px 1px"></div>
    <aside class="rightdock d-flex flex-column">
      <div class="d-flex align-items-center fixed" style="height:19px"><span class="text-end" style="width:135px">olbox</span><svg width="26" height="12" class="ms-auto" style="margin-right:1px" fill="none" stroke="#555"><rect x=".5" y=".5" width="10" height="10" rx="2"/><path d="M5 2.500h3.500V6H5zM3 5h3.500v3.500H3z"/><rect x="14.500" y=".5" width="10" height="10" rx="2"/><path d="M16.500 3l6 5.500M22.500 3l-6 5.500" stroke-width="2"/></svg></div>
      <div class="d-flex align-items-center fixed" style="height:29px;margin-bottom:2px;padding-left:102px;gap:7px"><i class="vr ms-1" style="height:12px;align-self:center"></i><svg class="s16"><use href="#note"/></svg><i class="vr" style="height:12px;align-self:center;margin-left:2px"></i><svg class="s16"><use href="#wrench"/></svg></div>
      <div class="box fixed" style="height:25px"></div>
      <div class="pane flex-grow-1 algs">
        <div class="trow"><span style="width:28px">aphy</span></div><div class="trow"><span style="width:8px">e</span></div><div class="trow"><span style="width:6px">s</span></div><div class="trow"><span style="width:3px">s</span></div><div class="trow"><span style="width:34px">ation</span></div><div class="trow"><span style="width:19px">ols</span></div><div class="trow"><span style="width:60px">k analysis</span></div><div class="trow"><span style="width:45px">analysis</span></div><div class="trow"><span style="width:94px">errain analysis</span></div><div class="trow"><span style="width:26px">ools</span></div><div class="trow"><span style="width:46px">analysis</span></div><div class="trow"><span style="width:48px">creation</span></div><div class="trow"><span style="width:45px">general</span></div><div class="trow"><span style="width:60px">geometry</span></div><div class="trow"><span style="width:42px">overlay</span></div><div class="trow"><span style="width:55px">selection</span></div><div class="trow"><span style="width:28px">able</span></div>
      </div>
    </aside>
  </div>
  <footer class="statusbar d-flex align-items-center t12">
    <div class="box d-flex align-items-center ps-1" style="width:273px;height:25px;margin-left:4px;color:#6d6d6d;font-size:14px"><svg width="14" height="14" style="margin:0 7px 0 3px"><use href="#find"/></svg><span data-w="152">Type to locate (Ctrl+K)</span></div>
    <span class="fixed" style="width:64px;margin-left:59px"><span data-w="61">Coordinate</span></span><div class="box" style="width:100px;height:23px;line-height:22px;padding-left:6px"><span data-w="84">505047,269779</span></div>
    <svg class="s16 ms-1" style="margin-right:13px"><use href="#ext"/></svg><span class="fixed" style="width:32px"><span data-w="28">Scale</span></span><div class="box d-flex align-items-center" style="width:97px;height:25px;padding-left:3px"><span data-w="50">1:454311</span><div class="raised h-100 ms-auto d-flex align-items-center justify-content-center" style="width:21px;border-width:0 0 0 1px"><i class="down sm"></i></div></div>
    <svg class="s16" style="margin:0 7px 0 10px"><use href="#lock"/></svg><span class="fixed" style="width:56px"><span data-w="52">Magnifier</span></span><div class="box d-flex align-items-center ps-1" style="width:98px;height:25px"><span data-w="30">100%</span><div class="spin ms-auto h-100 d-flex flex-column align-items-center justify-content-center"><i class="up"></i><i class="down sm"></i></div></div>
    <span class="fixed" style="width:57px;margin-left:9px"><span data-w="47">Rotation</span></span><div class="box d-flex align-items-center ps-1" style="width:93px;height:23px"><span data-w="23">0.0 °</span><div class="spin ms-auto h-100 d-flex flex-column align-items-center justify-content-center"><i class="up"></i><i class="down sm"></i></div></div>
    <i class="chk" style="margin:0 5px 0 7px"><svg width="12" height="12"><use href="#ck"/></svg></i><span class="fixed" style="width:57px"><span data-w="39">Render</span></span><svg class="s16" style="margin-right:4px"><use href="#ggl"/></svg><span data-w="65">EPSG:27700</span><svg class="s16 ms-auto" style="margin-right:7px"><use href="#bub"/></svg>
  </footer>
</div>
<div class="shade"></div>

<section class="dlg d-flex flex-column" role="dialog">
  <div class="dlg-title d-flex align-items-center justify-content-center"><b data-w="172">Project Properties | CRS</b><div class="dots d-flex"><i class="dot" style="background:#ff5555"></i></div></div>
  <div class="d-flex flex-grow-1">
    <nav class="side d-flex flex-column">
      <div class="search d-flex align-items-center"><svg width="14" height="14"><use href="#find"/></svg></div>
      <div class="opt d-flex align-items-center"><svg class="s26"><use href="#tools"/></svg><span data-w="53">General</span></div>
      <div class="opt d-flex align-items-center"><svg class="s26"><use href="#meta"/></svg><span data-w="66">Metadata</span></div>
      <div class="opt on d-flex align-items-center"><svg class="s26"><use href="#crs"/></svg><span data-w="27">CRS</span></div>
      <div class="opt d-flex align-items-center"><svg class="s26"><use href="#brush"/></svg><span data-w="96">Default Styles</span></div>
      <div class="opt d-flex align-items-center"><svg class="s26"><use href="#tbl"/></svg><span data-w="89">Data Sources</span></div>
      <div class="opt d-flex align-items-center"><svg class="s26"><use href="#rel"/></svg><span data-w="64">Relations</span></div>
      <div class="opt d-flex align-items-center"><svg class="s26"><use href="#var"/></svg><span data-w="63">Variables</span></div>
      <div class="opt d-flex align-items-center"><svg class="s26"><use href="#mac"/></svg><span data-w="49">Macros</span></div>
      <div class="opt d-flex align-items-center"><svg class="s26"><use href="#srv"/></svg><span data-w="82">QGIS Server</span></div>
    </nav>
    <div class="main d-flex flex-column">
      <div style="height:33px;padding:13px 0 0 3px"><b data-w="309">Project Coordinate Reference System (CRS)</b></div>
      <div class="group d-flex flex-column" style="height:576px">
        <div class="d-flex align-items-center" style="height:20px;margin-top:11px"><i class="chk" style="margin-right:5px"></i><span data-w="332">No projection (or unknown/non-Earth projection)</span></div>
        <div class="d-flex align-items-center" style="height:25px;margin-top:8px"><span class="fixed" style="width:42px"><span data-w="36">Filter</span></span><div class="box flex-grow-1 h-100 d-flex align-items-center" style="padding-left:7px"><svg width="14" height="14"><use href="#find"/></svg></div></div>
        <div class="d-flex align-items-center" style="height:29px"><b data-w="315">Recently used coordinate reference systems</b></div>
        <div class="pane d-flex flex-column" style="height:144px"><div class="colhead d-flex"><span style="width:418px;padding-left:2px"><span data-w="202">Coordinate Reference System</span></span><span style="padding-left:2px"><span data-w="83">Authority ID</span></span></div><div class="sb d-flex mt-auto"><i class="e"><i class="left"></i></i><i class="thumb flex-grow-1" style="margin-right:1px"></i><i class="e far"><i class="right"></i></i></div></div>
        <div class="d-flex align-items-center" style="height:33px"><b data-w="305">Coordinate reference systems of the world</b><i class="chk ms-auto" style="margin-right:5px"></i><span class="t12" data-w="120" style="margin-right:6px">Hide deprecated CRSs</span></div>
        <div class="pane d-flex flex-column" style="height:143px">
          <div class="d-flex flex-grow-1" style="min-height:0"><div class="flex-grow-1 d-flex flex-column overflow-hidden"><div class="colhead d-flex"><span style="width:418px;padding-left:2px"><span data-w="202">Coordinate Reference System</span></span><span style="padding-left:2px"><span data-w="83">Authority ID</span></span></div>
            <div class="flex-grow-1 overflow-hidden"><div class="crow d-flex"><div class="nm"><span data-w="241">New Beijing / Gauss-Kruger zone 20</span></div><span data-w="73">EPSG:4575</span></div><div class="crow d-flex"><div class="nm"><span data-w="241">New Beijing / Gauss-Kruger zone 21</span></div><span data-w="73">EPSG:4576</span></div><div class="crow d-flex"><div class="nm"><span data-w="241">New Beijing / Gauss-Kruger zone 22</span></div><span data-w="73">EPSG:4577</span></div><div class="crow d-flex"><div class="nm"><span data-w="241">New Beijing / Gauss-Kruger zone 23</span></div><span data-w="73">EPSG:4578</span></div><div class="crow on d-flex"><div class="nm"><span data-w="227">OSGB 1936 / British National Grid</span></div><span data-w="82">EPSG:27700</span></div><div class="crow bg-white d-flex"><div class="nm"><span data-w="227">OSGB 1936 / British National Grid</span></div><span data-w="73">EPSG:7405</span></div></div></div>
            <div class="vb d-flex flex-column"><i class="e"><i class="up"></i></i><i class="thumb" style="height:28px;margin-top:45px"></i><i class="e far mt-auto"><i class="down sm"></i></i></div></div>
          <div class="sb d-flex"><i class="e"><i class="left"></i></i><i class="thumb" style="width:601px"></i><i class="e far" style="margin-left:15px"><i class="right"></i></i><i class="flex-grow-1" style="background:var(--win);border-left:1px solid var(--line)"></i></div>
        </div>
        <div class="d-flex" style="height:144px;margin-top:6px;gap:6px">
          <div class="pane d-flex fixed" style="width:326px"><div class="flex-grow-1 overflow-hidden" style="padding:3px 0 0 4px"><b data-w="223">OSGB 1936 / British National Grid</b><div class="fw-bold" style="font-size:12px;margin-top:9px;height:17px"><span data-w="27">WKT</span></div><pre class="wkt">PROJCS["OSGB 1936 / British National
Grid",GEOGCS["OSGB 1936",DATUM["OSGB_
1936",SPHEROID["Airy 1830",
6377563.396,299.3249646,AUTHORITY["EP
SG","7001"]],TOWGS84[446.448,-125.157
,542.06,0.15,0.247,0.842,-20.489],AUT
HORITY["EPSG","6277"]],PRIMEM["G</pre></div>
            <div class="vb d-flex flex-column"><i class="e"><i class="up"></i></i><i class="thumb" style="height:32px"></i><i class="e far mt-auto"><i class="down sm"></i></i></div></div>
          <div class="pane fixed" style="width:326px"><svg width="324" height="142" viewBox="27 546 972 426">
            <g fill="#ebe9de" stroke="#8f8f84" stroke-width="2.500" stroke-linejoin="round">
            <path d="M788 540l-6 14 20-3-22 14 8 8 32-6-24 12 14 4 18-2-30 12 4 8 18-2-20 10 18-2 14 4-30 8 26 6-28 4 34 4-26 4 12 8-12 2 24 2-18 8-4 6 10 2 12 8 20 3 30 4 32-8 20-10 12-14 16-4 10-10 8 4 3-16 8 16 18 14V540z"/>
            <path d="M800 552l20 14 40-8 20 6-30 8-48 4M800 590l34 10M806 612l30 6M968 620l14-14" fill="none"/>
            <path d="M896 715l10-12 28-8 20-4 30-12-4 12-12 10-2 10 18-2 10 12-10 8-16 0-6 10-14 4-4 12 10 8-6 14 22 0 30 10 8 4V980H560l-4-16 4-8 24 0 4 10 36 2 6-12 40-12 8-30 30-4 24-14 30-8 14-16 6-24 12-8 50-8 24-8 22 8 8-10 14-4-10-14 12-14-20-12 4-10-6-16-2-20z"/>
            <path d="M955 762l26-10 8 16-12 10-20-4zM990 740l10-8v24l-10 8zM905 708l24 4 20-6M938 720l-14 10M895 808v6M530 968l24-10M384 546l8 10"/>
            <path d="M866 828l-4 20-6 14-26 4 6 20-10 18 10 24-8 22 14 16 20 22M780 878l24 8 22 8M708 906l34 18 38 14 12 16 30 14M735 892l20 12 30-8 14 8 24-2 8 12M914 784l4 18 28 8 54 8M750 884l14 14-20 6M738 890l16-4-10 12M742 900l14-2" fill="none"/>
            <path d="M450 652l12 6 54-8-4 10-12 6-14 12-10 4 4 6 76-8 4 6-14 18-16 20-24 14-14-2 30 4 24 8 12 14 2 20 14 12 24 6 12 18-4 8 20 6-4 10 30-4 22 6 4 10-10 12 0 8-12 6-30 4 36 2 8 6-12 10-32 8-42-2-34 6-36-2-16 14-18-6-22 8-18 6-6-4 24-12 16-22 34-4 22-10 14-10-24 8-22-4-14 8-32-8 0-6 30-8 12-8-4-10-22-6 6-14 54 2 0-22-12 0-10-10 10-8-32 2-22-4 14-14 6-14-24 0-14-8 18-8-28-8 16-6-12-10 14-4-10-12 12-8-8-8z"/>
            <path d="M272 804l14-8 46 0-8-12 12-4 8-10 34 4 10-8 32 0 16 24-12 14-20 4 8 26-6 26-14 6-10-2-46 14-22 10-24 6-26-6 22-8-22-6 24-4 14-6-24-8 20-6-18-8 14-6-18-6 18-6z"/>
            <path d="M326 785l12-12 6 6 16-8M342 796l14-10 12 16 16-6 18 8" fill="none"/>
            <path d="M386 674l20-18 4 10-18 14 8 4-16 4-8 6 4 8-8 4-6-12 10-12zM398 690l14-6 8 14 12 8-8 10-14 2 10 4-22 4 6-10 10-8-14-4zM402 746l22-14 12 10-14 12-14 2zM428 736l16-10 8 8-12 14-8 16zM508 642l8-16 10 6 6-4-10 14-8 8zM566 598l10-12 16-10-10 16 6 6-18 6zM566 618v4M549 598v4M327 678v4M458 804l12-12 4 2-14 12z"/></g>
            <path d="M307 564h413v390H307z" fill="#ff5050" fill-opacity=".38" stroke="#ff5c5c" stroke-opacity=".65" stroke-width="9"/><rect x="600" y="850" width="46" height="44" fill="#b450dc" fill-opacity=".25"/><path d="M624 855v34M607 872h34" stroke="#ba50df" stroke-width="8"/></svg></div>
        </div>
      </div>
      <div class="d-flex align-items-center" style="height:27px;padding:4px 0 0 1px"><i class="down" style="border-width:7px 6px 0;margin-right:8px"></i><b data-w="169">Datum Transformations</b></div>
      <div class="group d-flex flex-column" style="height:151px">
        <div class="d-flex align-items-center" style="height:20px;margin-top:11px;color:#b9b6b2"><i class="chk" style="background:#f4f2f0;margin-right:5px"><svg width="12" height="12" style="color:#999"><use href="#ck"/></svg></i><span data-w="535">Ask for datum transformation if several are available (defined in global setting)</span></div>
        <div class="d-flex" style="margin-top:8px"><div class="raised sqbtn"><svg width="16" height="16"><path d="M5.500 1.500h4v4h4v4h-4v4h-4v-4h-4v-4h4z" fill="#fff" stroke="#4a8b55"/><path d="M7.500 3.500v8M3.500 7.500h8" stroke="#4a8b55" stroke-width="1.400"/></svg></div><div class="raised sqbtn"><svg width="16" height="16"><path d="M1.500 5.500h13v5h-13z" fill="#fff" stroke="#e05252"/><path d="M3 8h10" stroke="#f05050" stroke-width="2"/></svg></div><div class="raised sqbtn" style="border-color:#cfccc8"><svg width="16" height="16"><path d="M11 2l2.500 1.500-6 9-3.500 2 .5-4z" fill="#deddd8" stroke="#cfcecb"/></svg></div></div>
        <div class="pane d-flex flex-column" style="height:70px;margin-top:6px">
          <div class="colhead d-flex"><span class="text-center fixed" style="width:87px;padding-left:3px"><span data-w="77">Source CRS</span></span><span class="text-center fixed" style="width:364px"><span data-w="170">Source Datum Transform</span></span><span class="text-center fixed" style="width:121px"><span data-w="110">Destination CRS</span></span><span style="padding-left:7px"><span data-w="205">Destination Datum Transform</span></span></div>
          <div class="drow d-flex align-items-center"><span class="h-100 d-flex align-items-center fixed" style="width:87px;border-left:2px solid #ccc"><span data-w="71">EPSG:27700</span></span><span class="h-100 d-flex align-items-center fixed" style="width:364px"><span data-w="356">+towgs84=446.448,-125.157,542.06,0.15,0.247,0.842,-20.489</span></span><span class="h-100 d-flex align-items-center fixed" style="width:121px"><span data-w="63">EPSG:4326</span></span></div>
          <div class="sb d-flex mt-auto"><i class="e"><i class="left"></i></i><i class="thumb" style="width:316px"></i><i class="e far ms-auto"><i class="right"></i></i></div>
        </div>
      </div>
      <div class="d-flex" style="margin:15px -9px 0 -10px;gap:6px"><div class="raised dbtn me-auto" style="padding-right:2px"><svg class="s16" style="margin-right:1px"><use href="#quest"/></svg><span data-w="31">Help</span></div><div class="raised dbtn" style="padding-right:2px"><svg class="s16 tk"><use href="#tick"/></svg><span data-w="39">Apply</span></div><div class="raised dbtn" style="padding-right:1px"><svg width="14" height="14" style="margin-right:2px"><use href="#cross"/></svg><span data-w="45"><u>C</u>ancel</span></div><div class="raised dbtn okbtn" style="padding-right:2px"><svg class="s16 tk"><use href="#tick"/></svg><span data-w="21"><u>O</u>K</span></div></div>
    </div>
  </div>
</section>
<script src="https://cdn.jsdelivr.net/npm/bootstrap@5.3.0/dist/js/bootstrap.bundle.min.js"></script>
<script>
document.querySelectorAll('[data-w]').forEach(el => {
  const d = el.style.display; el.style.display = 'inline-block';
  const n = el.textContent.length, w = el.getBoundingClientRect().width;
  el.style.display = d;
  el.style.letterSpacing = ((el.dataset.w - w) / n).toFixed(3) + 'px';
});
</script>
</body>
</html>
